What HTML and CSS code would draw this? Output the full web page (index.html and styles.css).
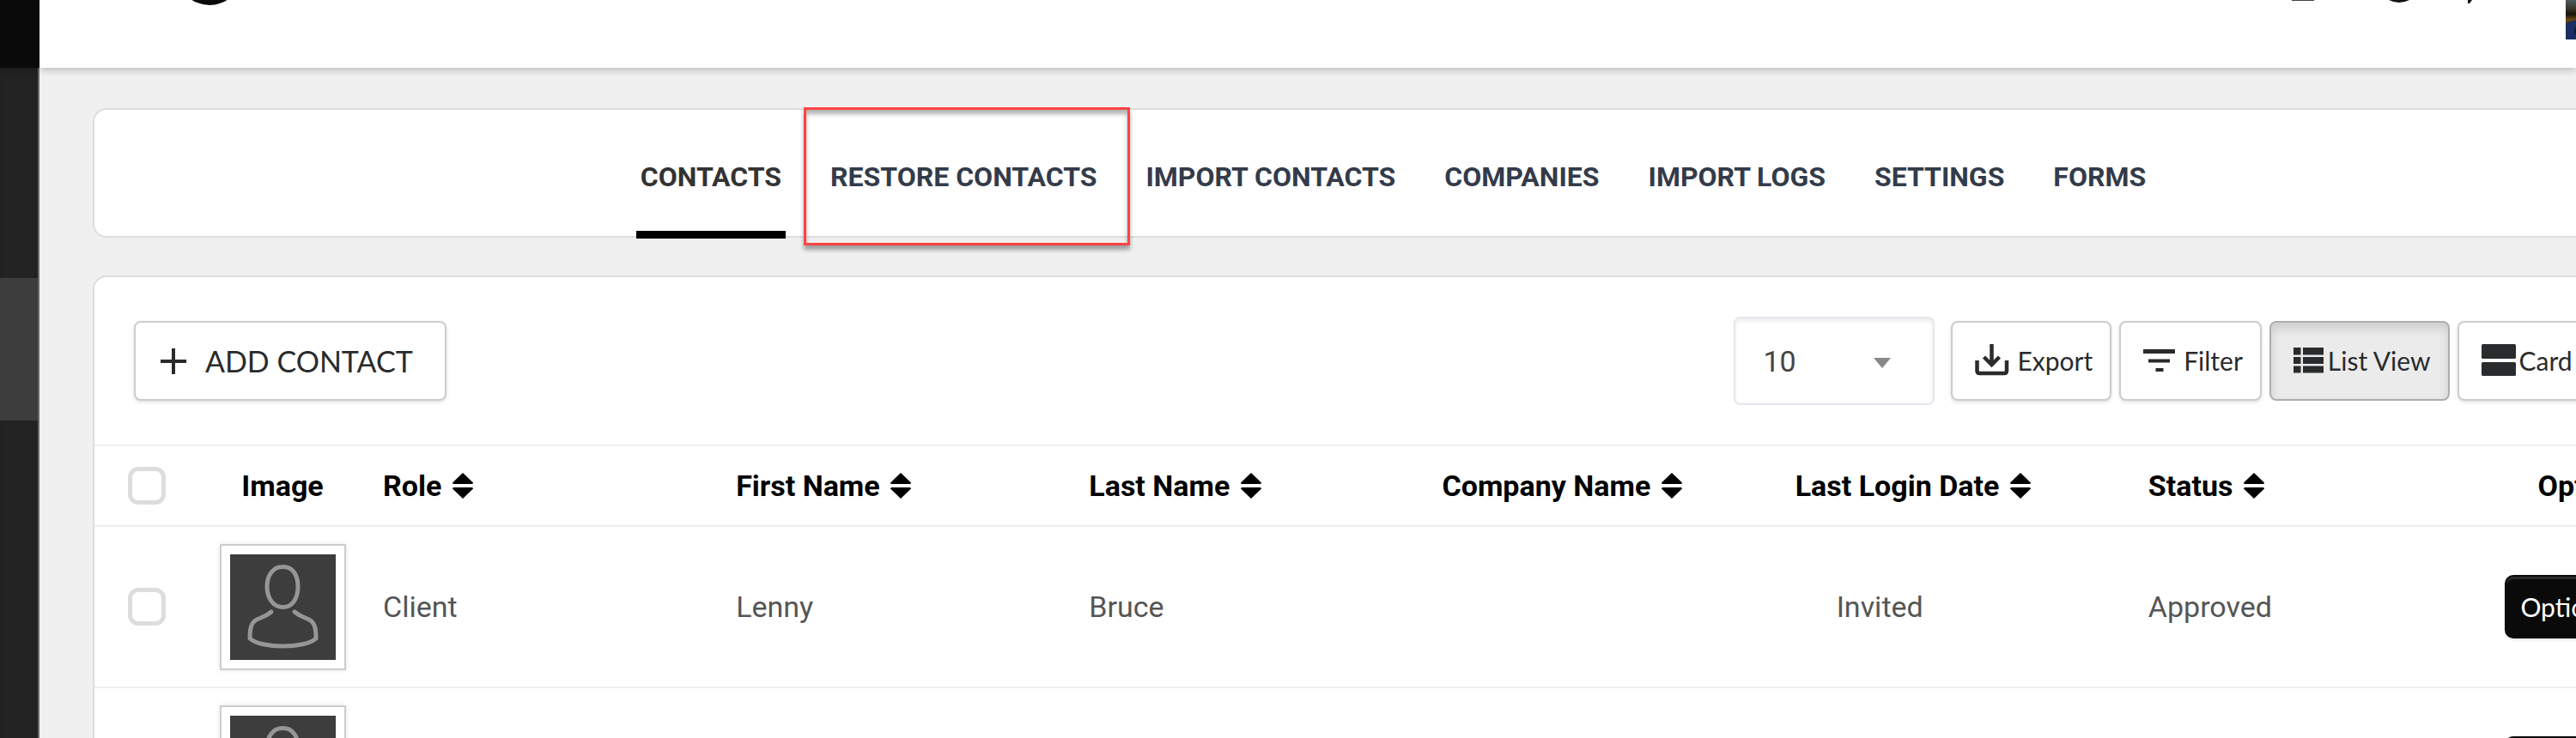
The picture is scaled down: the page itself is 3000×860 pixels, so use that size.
FILE: index.html
```html
<!DOCTYPE html>
<html lang="en">
<head>
<meta charset="utf-8">
<title>Contacts</title>
<link rel="stylesheet" href="styles.css">
</head>
<body>
<svg class="defs" aria-hidden="true">
  <symbol id="sort" viewBox="0 0 24 30"><path d="M12 0 24 11.5Q24 13 22.500 13H1.500Q0 13 0 11.500ZM12 30 0 18.500Q0 17 1.500 17H22.500Q24 17 24 18.500Z"/></symbol>
  <symbol id="person" viewBox="0 0 123 123">
    <rect width="123" height="123" fill="#3d3d3d"/>
    <g fill="none" stroke="#969696" stroke-width="5" stroke-linecap="round">
      <path d="M61.500 14.500C73 14.500 79 24 79 37.500C79 52 72 61.500 61.500 61.500S43 52 43 37.500C43 24 50 14.500 61.500 14.500Z"/>
      <path d="M48 67C42 72 38 73 32 75.500C24 79 23 87 23 98C36 110 87 110 100 98C100 87 99 79 91 75.500C85 73 81 72 75 67"/>
    </g>
  </symbol>
</svg>
<div class="app">
  <aside class="sidebar">
    <div class="sidebar-top"></div>
    <nav class="sidebar-nav" aria-label="Main"><a class="sidebar-item" href="#" aria-label="Contacts"></a></nav>
  </aside>
  <div class="page">
    <header class="topbar">
      <a class="logo" href="#" aria-label="Home"><svg width="44" height="8" viewBox="0 0 44 8"><circle cx="22" cy="-32" r="38" fill="#0a0a0a"/></svg></a>
      <div class="topbar-tools">
        <svg width="26" height="6" viewBox="0 0 26 6"><path d="M0 0h26v1H0z" fill="#444"/></svg>
        <svg width="24" height="6" viewBox="0 0 24 6"><path d="M0 0h24Q12 6 0 0z" fill="#111"/></svg>
        <svg width="6" height="6" viewBox="0 0 6 6"><path d="M0 0h5L2 4H0z" fill="#111"/></svg>
        <svg class="avatar" width="46" height="46" viewBox="0 0 46 46">
          <defs><linearGradient id="bg" x1="0" y1="0" x2="0" y2="1"><stop offset="0" stop-color="#4c5a5f"/><stop offset=".22" stop-color="#3a3626"/><stop offset=".36" stop-color="#15130f"/><stop offset=".5" stop-color="#6b4a10"/><stop offset=".6" stop-color="#3c3318"/></linearGradient></defs>
          <rect width="46" height="46" fill="url(#bg)"/><path d="M0 28 8 24 46 18V46H0z" fill="#1b2e63"/><path d="M10 32 14 36 10 41z" fill="#0c1738"/>
        </svg>
      </div>
    </header>
    <main class="content">
      <nav class="card tabs" aria-label="Contacts sections">
        <a class="tab active" href="#">CONTACTS</a>
        <a class="tab marked" href="#">RESTORE CONTACTS</a>
        <a class="tab" href="#">IMPORT CONTACTS</a>
        <a class="tab" href="#">COMPANIES</a>
        <a class="tab" href="#">IMPORT LOGS</a>
        <a class="tab" href="#">SETTINGS</a>
        <a class="tab" href="#">FORMS</a>
      </nav>
      <section class="card">
        <div class="toolbar">
          <button class="btn add" type="button"><svg width="30" height="30" viewBox="0 0 30 30"><path d="M13 0h4v13h13v4H17v13h-4V17H0v-4h13z"/></svg>ADD CONTACT</button>
          <div class="tools">
            <div class="select">
              <select aria-label="Rows per page"><option>10</option><option>25</option><option>50</option></select>
              <svg width="20" height="12" viewBox="0 0 20 12"><path d="M0 0h20L10 12z" fill="#888"/></svg>
            </div>
            <button class="btn" type="button"><svg class="wide-gap" width="40" height="38" viewBox="0 0 40 38"><path d="M2.500 19V31Q2.500 34 5.500 34H34Q37 34 37 31V19M19.500 0V25M10.500 15 19.500 24 28.500 15" fill="none" stroke="#292b2c" stroke-width="4.500"/></svg>Export</button>
            <button class="btn" type="button"><svg class="wide-gap" width="38" height="38" viewBox="0 0 38 38"><path d="M0 6H37V11H0zM6 17.500H31V21.500H6zM14.500 28H23.500V32H14.500z"/></svg>Filter</button>
            <button class="btn pressed" type="button" aria-pressed="true"><svg width="36" height="38" viewBox="0 0 36 38"><path d="M0 4h8.500v8.500H0zM11 4h24v8.500H11zM0 15h8.500v8H0zM11 15h24v8H11zM0 25.500h8.500v8H0zM11 25.500h24v8H11z"/></svg>List View</button>
            <button class="btn" type="button"><svg width="40" height="38" viewBox="0 0 40 38"><rect width="40" height="17" rx="1.500"/><rect y="21" width="40" height="16" rx="1.500"/></svg>Card View</button>
          </div>
        </div>
        <table class="contacts">
          <colgroup><col class="col-check"><col class="col-image"><col><col><col><col><col><col><col class="col-options"></colgroup>
          <thead>
            <tr>
              <th class="check"><input type="checkbox" aria-label="Select all"></th>
              <th class="mid">Image</th>
              <th>Role <svg class="sort"><use href="#sort"/></svg></th>
              <th>First Name <svg class="sort"><use href="#sort"/></svg></th>
              <th>Last Name <svg class="sort"><use href="#sort"/></svg></th>
              <th>Company Name <svg class="sort"><use href="#sort"/></svg></th>
              <th>Last Login Date <svg class="sort"><use href="#sort"/></svg></th>
              <th>Status <svg class="sort"><use href="#sort"/></svg></th>
              <th class="mid">Options</th>
            </tr>
          </thead>
          <tbody>
            <tr>
              <td class="check"><input type="checkbox" aria-label="Select Lenny Bruce"></td>
              <td class="mid"><svg class="photo"><use href="#person"/></svg></td>
              <td>Client</td>
              <td>Lenny</td>
              <td>Bruce</td>
              <td></td>
              <td class="login">Invited</td>
              <td>Approved</td>
              <td class="mid"><button class="options" type="button">Options <svg width="20" height="12" viewBox="0 0 20 12"><path d="M0 0h20L10 12z" fill="#fff"/></svg></button></td>
            </tr>
            <tr>
              <td class="check"><input type="checkbox" aria-label="Select contact"></td>
              <td class="mid"><svg class="photo"><use href="#person"/></svg></td>
              <td></td><td></td><td></td><td></td><td></td><td></td>
              <td class="mid"><button class="options" type="button">Options <svg width="20" height="12" viewBox="0 0 20 12"><path d="M0 0h20L10 12z" fill="#fff"/></svg></button></td>
            </tr>
          </tbody>
        </table>
      </section>
    </main>
  </div>
</div>
</body>
</html>
```

FILE: styles.css
```css
* { box-sizing: border-box; }
body {
  margin: 0;
  background: #f0f0f0;
  color: #555;
  font: 34px/40px Roboto, "Liberation Sans", sans-serif;
}
button, select { font: inherit; color: inherit; }
.defs { position: absolute; width: 0; height: 0; }
.app { display: flex; height: 100vh; overflow: hidden; }

.sidebar {
  display: flex;
  flex-direction: column;
  flex: 0 0 46px;
  background: #232323;
}
.sidebar-top { height: 79px; background: #0a0a0a; }
.sidebar-nav {
  flex: 1;
  padding-top: 245px;
  border-right: 2px solid #666;
  box-shadow: inset 0 8px 8px -4px #1c1c1c;
}
.sidebar-item { display: block; height: 166px; background: #3d3d3d; }

.page { flex: 1; min-width: 0; }
.topbar {
  display: flex;
  justify-content: space-between;
  align-items: flex-start;
  height: 79px;
  padding-left: 176px;
  background: #fff;
  box-shadow: 0 3px 8px rgba(0, 0, 0, .2);
}
.logo, .topbar-tools svg { display: block; }
.logo svg { display: block; }
.topbar-tools { display: flex; gap: 87px; margin-right: -34px; }
.topbar-tools svg:nth-child(3) { margin-left: -19px; }
.avatar { margin-left: 21px; }

/* The work area runs wider than the window. */
.content { width: calc(100% + 137px); padding: 47px 0 0 62px; }
.card {
  background: #fff;
  border: 2px solid #ddd;
  border-radius: 16px;
}
.card + .card { margin-top: 44px; }

.tabs {
  display: flex;
  justify-content: center;
  gap: 47px;
  height: 151px;
}
.tab {
  position: relative;
  padding: 56px 5px 0;
  color: #333b4a;
  font-size: 32px;
  font-weight: 700;
  line-height: 44px;
  text-decoration: none;
}
.tab.active { color: #333; }
.tab.active::after {
  content: "";
  position: absolute;
  inset: auto 0 -3px 0;
  height: 9px;
  background: #000;
}
.tab.marked::after {
  content: "";
  position: absolute;
  inset: -3px -34px -11px -26px;
  border: 3px solid #ff4242;
  box-shadow: 0 5px 5px rgba(0, 0, 0, .35), inset 0 5px 5px rgba(0, 0, 0, .3);
}

.toolbar {
  display: flex;
  justify-content: space-between;
  align-items: center;
  padding: 46px 44px 46px 46px;
}
.tools { display: flex; align-items: center; gap: 9px; }
.btn {
  display: flex;
  align-items: center;
  gap: 4px;
  height: 93px;
  padding: 0 20px 2px 26px;
  border: 2px solid #ccc;
  border-radius: 8px;
  background: #fff;
  box-shadow: 0 2px 4px rgba(0, 0, 0, .12);
  color: #292b2c;
  font-family: Lato, "Liberation Sans", sans-serif;
  font-size: 30px;
  white-space: nowrap;
}
.btn svg { fill: #292b2c; flex: none; }
.btn .wide-gap { margin-right: 5px; }
.btn.pressed {
  background: #ebebeb;
  border-color: #adadad;
  box-shadow: inset 0 6px 12px rgba(0, 0, 0, .14);
}
.btn.add { gap: 22px; padding: 0 37px 0 29px; font-size: 34px; }
.select { position: relative; margin-right: 10px; }
.select select {
  display: block;
  width: 234px;
  height: 103px;
  padding: 0 32px;
  appearance: none;
  border: 2px solid #e3e8ee;
  border-radius: 8px;
  background: #fff;
  box-shadow: inset 0 3px 4px rgba(0, 0, 0, .08);
  color: #444;
}
.select svg { position: absolute; right: 51px; top: 48px; pointer-events: none; }

.contacts {
  width: 100%;
  table-layout: fixed;
  border-collapse: separate;
  border-spacing: 0;
}
.col-check { width: 120px; }
.col-image { width: 198px; }
.col-options { width: 240px; }
th, td {
  padding: 0 0 0 18px;
  border-top: 2px solid #eee;
  text-align: left;
  vertical-align: middle;
}
th { height: 94px; color: #000; font-weight: 700; }
td { height: 188px; }
.check { padding-left: 39px; }
.mid { padding: 0; text-align: center; }
.login { padding-left: 66px; }
.sort { width: 24px; height: 30px; vertical-align: -3px; margin-left: 4px; }
input[type="checkbox"] {
  display: block;
  width: 44px;
  height: 44px;
  margin: 0;
  appearance: none;
  border: 5px solid #ddd;
  border-radius: 12px;
  background: #fff;
}
.photo {
  display: block;
  width: 147px;
  height: 147px;
  margin: 0 auto;
  padding: 10px;
  border: 2px solid #ccc;
  box-shadow: 0 0 6px rgba(0, 0, 0, .1);
}
.options {
  width: 196px;
  height: 74px;
  padding: 0;
  border: 2px solid #0a0a0a;
  border-radius: 10px;
  background: #0a0a0a;
  box-shadow: inset 0 3px 0 #2b2b2b, 0 2px 3px rgba(0, 0, 0, .1);
  color: #fff;
  font-family: Lato, "Liberation Sans", sans-serif;
  font-size: 30px;
}
.options svg { margin-left: 26px; vertical-align: 4px; }
```
